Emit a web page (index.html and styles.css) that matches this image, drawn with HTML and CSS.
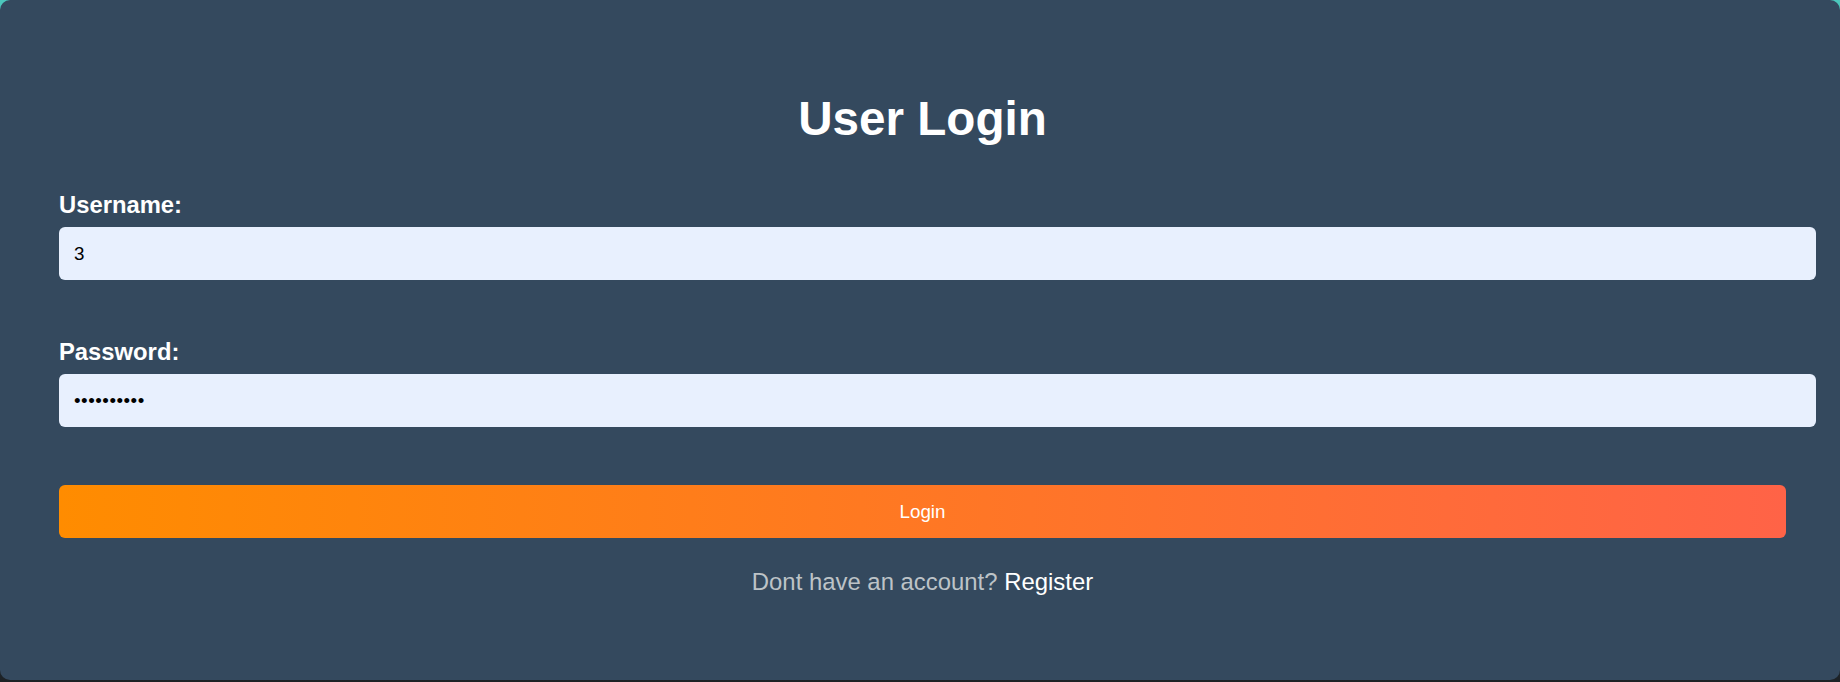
FILE: index.html
```html
<!DOCTYPE html>
<html lang="en">
<head>
<meta charset="utf-8">
<title>User Login</title>
<link rel="stylesheet" href="styles.css">
</head>
<body>
<div class="card">
  <h2 class="title">User Login</h2>
  <form class="form">
    <div class="group">
      <label class="label" for="username">Username:</label>
      <input class="field" id="username" type="text" value="3">
    </div>
    <div class="group">
      <label class="label" for="password">Password:</label>
      <input class="field field-pass" id="password" type="password" value="1234567890">
    </div>
    <button class="btn" type="button">Login</button>
  </form>
  <p class="footer">Dont have an account? <a class="link" href="#">Register</a></p>
</div>
</body>
</html>
```

FILE: styles.css
```css
html, body {
  margin: 0;
  padding: 0;
}
body {
  width: 1840px;
  height: 682px;
  background: linear-gradient(to bottom, #4cc8bc 0%, #2b4a58 50%, #1d2226 100%);
  font-family: "Liberation Sans", Arial, sans-serif;
  overflow: hidden;
}
.card {
  box-sizing: border-box;
  width: 1840px;
  height: 680px;
  background: #34495e;
  border-radius: 10px;
  padding: 92px 54px 0 59px;
}
.title {
  margin: 0 0 45px;
  font-size: 47.6px;
  line-height: 54px;
  font-weight: bold;
  color: #ffffff;
  text-align: center;
}
.form {
  margin: 0;
}
.group {
  margin-bottom: 58px;
}
.label {
  display: block;
  font-size: 23.8px;
  line-height: 28px;
  font-weight: bold;
  color: #ffffff;
  margin-bottom: 8px;
}
.field {
  display: block;
  box-sizing: content-box;
  width: 100%;
  height: 53px;
  padding: 0 15px;
  margin: 0;
  border: none;
  border-radius: 6px;
  background: #e8f0fe;
  color: #000000;
  font-family: "Liberation Sans", Arial, sans-serif;
  font-size: 18.8px;
  outline: none;
}
.field-pass {
  letter-spacing: 0.5px;
}
.btn {
  display: block;
  width: 100%;
  height: 53px;
  margin: 0;
  border: none;
  border-radius: 6px;
  background: linear-gradient(to right, #ff8c00, #ff6347);
  color: #ffffff;
  font-family: "Liberation Sans", Arial, sans-serif;
  font-size: 18.8px;
  cursor: pointer;
}
.footer {
  margin: 30px 0 0;
  font-size: 23.9px;
  line-height: 27px;
  color: #bdc3c7;
  text-align: center;
}
.link {
  color: #ffffff;
  text-decoration: none;
}
```
